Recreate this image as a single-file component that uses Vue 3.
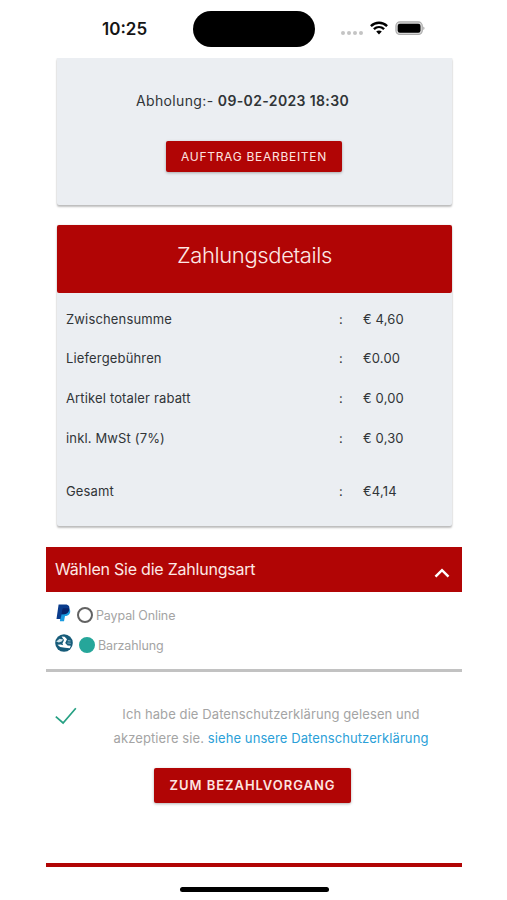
<template>
  <div class="screen">
    <header class="status-bar">
      <span class="status-time">10:25</span>
      <div class="island"></div>
      <div class="status-icons">
        <span class="signal"><i v-for="n in 4" :key="n"></i></span>
        <svg class="wifi" viewBox="0 0 18 14" width="18" height="14">
          <g fill="none" stroke="#000" stroke-width="2.4">
            <path d="M0.9 5.1 C5.5 0.7 12.5 0.7 17.1 5.1" />
            <path d="M3.9 8.2 C6.9 5.4 11.1 5.4 14.1 8.2" />
          </g>
          <path d="M9 13.4 L6.2 10.6 C7.8 9.2 10.2 9.2 11.8 10.6 Z" />
        </svg>
        <svg class="battery" viewBox="0 0 30 15" width="30" height="15">
          <rect x="0.9" y="0.9" width="26.4" height="12.6" rx="4" fill="#d8d8d8" stroke="#aaa" stroke-width="1.1" />
          <rect x="2.7" y="2.7" width="22.8" height="9" rx="2.2" />
          <path d="M28.4 5.4 C29.8 6 29.8 8.4 28.4 9 Z" fill="#999" />
        </svg>
      </div>
    </header>

    <section class="card order-card">
      <p class="pickup">Abholung:- <b>09-02-2023 18:30</b></p>
      <button class="btn btn-edit">AUFTRAG BEARBEITEN</button>
    </section>

    <section class="card payment-card">
      <h2 class="card-title">Zahlungsdetails</h2>
      <div class="rows">
        <div v-for="row in rows" :key="row.label" class="row" :class="{ total: row.total }">
          <span class="row-label">{{ row.label }}</span>
          <span class="row-sep">:</span>
          <span class="row-value">{{ row.value }}</span>
        </div>
      </div>
    </section>

    <section class="method">
      <div class="method-header" @click="open = !open">
        <span>Wählen Sie die Zahlungsart</span>
        <svg class="chevron" :class="{ closed: !open }" viewBox="0 0 16 10" width="16" height="10">
          <path d="M1.5 8.6 L8 2.2 L14.5 8.6" fill="none" stroke="#fff" stroke-width="2.5" />
        </svg>
      </div>
      <div v-show="open" class="method-body">
        <label class="option" @click="method = 'paypal'">
          <svg class="option-logo" viewBox="0 0 15 18" width="15" height="18">
            <path d="M5.2 4.2 H12.4 C14.6 5.3 14.8 8.1 13.4 10 C12.3 11.5 10.8 12 9 12 L8 17.2 H3.9 Z" fill="#1a9be0" />
            <path d="M2.6 0.6 H9.3 C13 0.6 14 3.1 13.1 5.8 C12.2 8.9 10.2 10.2 7.2 10.2 H5.6 L4.6 15 H0.5 Z" fill="#0a3c8c" />
            <path d="M5.5 10.2 L6.4 5.4 C6.5 4.6 7 4.2 7.8 4.2 H13.3 C13.3 8.6 10.6 10.2 7.2 10.2 Z" fill="#08256b" />
          </svg>
          <span class="radio" :class="{ checked: method === 'paypal' }"></span>
          <span>Paypal Online</span>
        </label>
        <label class="option" @click="method = 'cash'">
          <svg class="option-logo option-logo-cash" viewBox="0 0 18 18" width="18" height="18">
            <circle cx="9" cy="9" r="8.8" fill="#165b79" />
            <path d="M1.2 7.6 L4.6 4.8 L8.2 5.4 L6.6 7.6 L3.8 8.6 Z" fill="#cfe3ea" />
            <path d="M6.6 2.4 L9.6 2.8 L12 5.2 L10.2 9 L12.6 11.4 L15.8 11.8 L14.8 14.2 L10 13.8 L5.2 13 L2.4 10.8 L5.6 10.4 L8.2 11.2 L7.4 9.4 L9 6 Z" fill="#fff" />
            <path d="M12.8 6.6 L15.6 7 M12.4 9 L15.8 9.2" stroke="#7fb0c2" stroke-width="1.1" />
          </svg>
          <span class="radio" :class="{ checked: method === 'cash' }"></span>
          <span>Barzahlung</span>
        </label>
      </div>
    </section>

    <section class="consent">
      <svg class="check" viewBox="0 0 22 18" width="22" height="18">
        <path d="M0.8 9.6 L8.1 16 L20.8 1.3" fill="none" stroke="#26a083" stroke-width="1.7" />
      </svg>
      <p class="consent-text">
        Ich habe die Datenschutzerklärung gelesen und<br />
        akzeptiere sie. <a href="#">siehe unsere Datenschutzerklärung</a>
      </p>
    </section>

    <button class="btn btn-pay">ZUM BEZAHLVORGANG</button>

    <hr class="footer-line" />
    <div class="home-indicator"></div>
  </div>
</template>

<script setup>
import { ref } from "vue";

const open = ref(true);
const method = ref("cash");

const rows = [
  { label: "Zwischensumme", value: "€ 4,60" },
  { label: "Liefergebühren", value: "€0.00" },
  { label: "Artikel totaler rabatt", value: "€ 0,00" },
  { label: "inkl. MwSt (7%)", value: "€ 0,30" },
  { label: "Gesamt", value: "€4,14", total: true },
];
</script>

<style>
body {
  background: #fff;
}
</style>

<style scoped>
.screen {
  width: 507px;
  height: 900px;
  overflow: hidden;
  display: flex;
  flex-direction: column;
  background: #fff;
  font-family: Inter, "Liberation Sans", sans-serif;
  font-size: 13px;
  color: #303437;
}

/* STATUS BAR */
.status-bar {
  flex: none;
  height: 58px;
  display: flex;
  align-items: center;
  box-sizing: border-box;
  padding-left: 102px;
}

.status-time {
  width: 91px;
  font-size: 17px;
  font-weight: 600;
  color: #151515;
}

.island {
  width: 122px;
  height: 36px;
  border-radius: 18px;
  background: #000;
}

.status-icons {
  display: flex;
  align-items: center;
  margin-left: 26px;
  margin-top: -2px;
}

.signal {
  display: flex;
  gap: 2px;
  margin: 9px 7px 0 0;
}

.signal i {
  width: 4px;
  height: 4px;
  border-radius: 50%;
  background: #c4c4c4;
}

.battery {
  margin-left: 7px;
}

/* CARDS */
.card {
  flex: none;
  width: 395px;
  margin-left: 57px;
  background: #ebeef2;
  border-radius: 2px;
  box-shadow: 0 2px 2px rgba(0, 0, 0, 0.24), 0 0 2px rgba(0, 0, 0, 0.14);
}

.order-card {
  height: 147px;
  display: flex;
  flex-direction: column;
  align-items: center;
  border-radius: 0 0 2px 2px;
  clip-path: inset(0 -5px -6px);
}

.pickup {
  margin: 33px 24px 0 0;
  line-height: 20px;
  font-size: 14px;
  letter-spacing: 0.36px;
  white-space: nowrap;
}

.pickup b {
  font-weight: 600;
}

.btn {
  border: none;
  padding: 0;
  border-radius: 2px;
  background: #b10505;
  color: #fde4e0;
  font-family: inherit;
  white-space: nowrap;
  cursor: pointer;
  box-shadow: 0 1px 3px rgba(0, 0, 0, 0.3);
}

.btn-edit {
  width: 176px;
  height: 31px;
  margin: 30px 1px 0 0;
  padding-bottom: 1px;
  font-size: 12px;
  letter-spacing: 0.72px;
}

.payment-card {
  height: 301px;
  margin-top: 20px;
}

.card-title {
  height: 68px;
  margin: 0;
  border-radius: 2px;
  background: #b10505;
  color: #fde9e6;
  font-size: 22px;
  font-weight: 300;
  line-height: 61px;
  text-align: center;
  letter-spacing: -0.38px;
}

.rows {
  padding: 6px 0 0 9px;
}

.row {
  height: 39.6px;
  display: grid;
  grid-template-columns: 273px 24px 1fr;
  align-items: center;
  letter-spacing: 0.15px;
}

.row.total {
  margin-top: 14px;
}

/* PAYMENT METHOD */
.method {
  flex: none;
  width: 416px;
  margin: 21px 0 0 46px;
  border-bottom: 3px solid #c2c2c2;
}

.method-header {
  height: 45px;
  box-sizing: border-box;
  padding: 0 12px 1px 9px;
  display: flex;
  align-items: center;
  justify-content: space-between;
  background: #b10505;
  color: #fde9e6;
  font-size: 16px;
  letter-spacing: -0.22px;
  cursor: pointer;
}

.chevron {
  margin-top: 8px;
}

.chevron.closed {
  transform: rotate(180deg);
}

.method-body {
  height: 69px;
  padding: 8px 0 0 10px;
}

.option {
  height: 30px;
  display: flex;
  align-items: center;
  color: #a4a4a4;
  font-size: 12.5px;
  letter-spacing: -0.12px;
  cursor: pointer;
}

.option-logo {
  margin: 0 6px 5px 0;
}

.option-logo-cash {
  margin-left: -1px;
}

.radio {
  width: 16px;
  height: 16px;
  box-sizing: border-box;
  border: 2px solid #626262;
  border-radius: 50%;
  margin-right: 3px;
}

.radio.checked {
  border-color: #26a69a;
  background: #26a69a;
}

/* CONSENT */
.consent {
  flex: none;
  display: flex;
  margin: 30px 0 0 55px;
}

.check {
  margin-top: 5px;
}

.consent-text {
  width: 320px;
  margin: 0 0 0 34px;
  text-align: center;
  line-height: 24px;
  letter-spacing: 0.09px;
  color: #a4a4a4;
  white-space: nowrap;
}

.consent-text a {
  color: #2b9fd8;
  text-decoration: none;
}

.btn-pay {
  flex: none;
  width: 197px;
  height: 35px;
  margin: 18px 0 0 154px;
  padding-bottom: 1px;
  font-size: 13px;
  font-weight: 600;
  letter-spacing: 0.95px;
}

.footer-line {
  flex: none;
  width: 416px;
  height: 4px;
  margin: 60px 0 0 46px;
  border: none;
  background: #b10505;
}

.home-indicator {
  flex: none;
  width: 149px;
  height: 5px;
  margin: 20px 0 0 180px;
  border-radius: 3px;
  background: #000;
}
</style>
